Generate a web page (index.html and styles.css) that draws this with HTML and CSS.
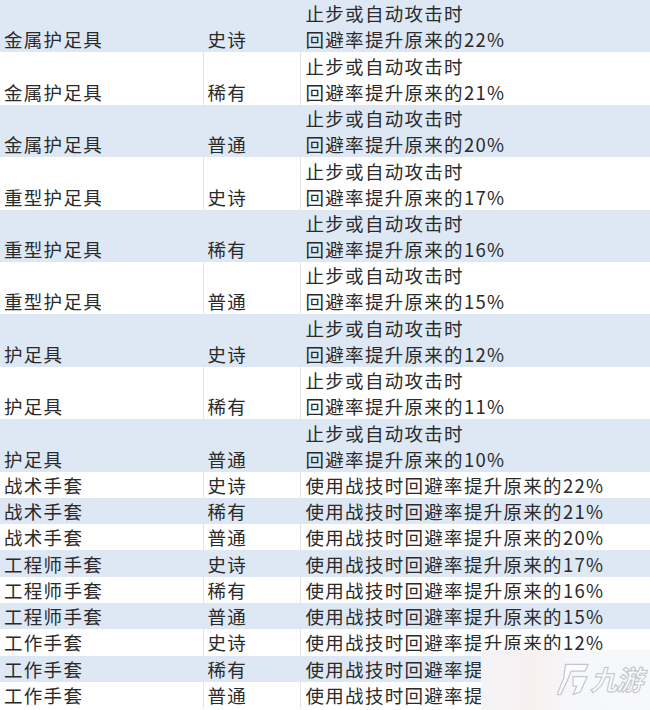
FILE: index.html
```html
<!DOCTYPE html>
<html lang="zh-CN">
<head>
<meta charset="utf-8">
<title>回避率装备表</title>
<link rel="stylesheet" href="styles.css">
</head>
<body>
<div class="page">
<table class="gear">
<colgroup><col class="c-name"><col class="c-rare"><col class="c-eff"></colgroup>
<tbody>
<tr class="tall blue"><td>金属护足具</td><td>史诗</td><td class="eff">止步或自动攻击时<br>回避率提升原来的22%</td></tr>
<tr class="tall white"><td>金属护足具</td><td>稀有</td><td class="eff">止步或自动攻击时<br>回避率提升原来的21%</td></tr>
<tr class="tall blue"><td>金属护足具</td><td>普通</td><td class="eff">止步或自动攻击时<br>回避率提升原来的20%</td></tr>
<tr class="tall white"><td>重型护足具</td><td>史诗</td><td class="eff">止步或自动攻击时<br>回避率提升原来的17%</td></tr>
<tr class="tall blue"><td>重型护足具</td><td>稀有</td><td class="eff">止步或自动攻击时<br>回避率提升原来的16%</td></tr>
<tr class="tall white"><td>重型护足具</td><td>普通</td><td class="eff">止步或自动攻击时<br>回避率提升原来的15%</td></tr>
<tr class="tall blue"><td>护足具</td><td>史诗</td><td class="eff">止步或自动攻击时<br>回避率提升原来的12%</td></tr>
<tr class="tall white"><td>护足具</td><td>稀有</td><td class="eff">止步或自动攻击时<br>回避率提升原来的11%</td></tr>
<tr class="tall blue"><td>护足具</td><td>普通</td><td class="eff">止步或自动攻击时<br>回避率提升原来的10%</td></tr>
<tr class="short white"><td>战术手套</td><td>史诗</td><td class="eff">使用战技时回避率提升原来的22%</td></tr>
<tr class="short blue"><td>战术手套</td><td>稀有</td><td class="eff">使用战技时回避率提升原来的21%</td></tr>
<tr class="short white"><td>战术手套</td><td>普通</td><td class="eff">使用战技时回避率提升原来的20%</td></tr>
<tr class="short blue"><td>工程师手套</td><td>史诗</td><td class="eff">使用战技时回避率提升原来的17%</td></tr>
<tr class="short white"><td>工程师手套</td><td>稀有</td><td class="eff">使用战技时回避率提升原来的16%</td></tr>
<tr class="short blue"><td>工程师手套</td><td>普通</td><td class="eff">使用战技时回避率提升原来的15%</td></tr>
<tr class="short white"><td>工作手套</td><td>史诗</td><td class="eff">使用战技时回避率提升原来的12%</td></tr>
<tr class="short blue"><td>工作手套</td><td>稀有</td><td class="eff">使用战技时回避率提升原来的11%</td></tr>
<tr class="short white"><td>工作手套</td><td>普通</td><td class="eff">使用战技时回避率提升原来的10%</td></tr>
</tbody>
</table>
<div class="watermark">
<svg class="wm-logo" viewBox="0 0 34 36" width="32" height="35">
<path d="M9 2 L33 2 L30 9 L15 9 L11 19 L4 34 L0 34 L7 17 Z M17 15 L32 15 L25 31 L17 34 L21 25 L17 25 Z" fill="#fbfbfc" stroke="#c3c7cd" stroke-width="1.3" stroke-linejoin="round"/>
</svg>
<span class="wm-text">九游</span>
</div>
</div>
</body>
</html>
```
FILE: styles.css
```css
html, body {
  margin: 0;
  padding: 0;
  background: #ffffff;
}
.page {
  position: relative;
  width: 650px;
  height: 710px;
  overflow: hidden;
}
.gear {
  width: 650px;
  border-collapse: collapse;
  table-layout: fixed;
  font-family: "Noto Sans CJK SC", "Noto Sans", sans-serif;
  font-size: 18.5px;
  letter-spacing: 1.3px;
  color: #2a2a2a;
}
.c-name { width: 203px; }
.c-rare { width: 97px; }
.c-eff { width: 350px; }
.gear td {
  padding: 0 0 0 4px;
  white-space: nowrap;
  overflow: hidden;
  border-left: 1px solid transparent;
}
.gear td:nth-child(2) { padding-left: 4px; }
.gear td.eff { padding-left: 5px; }
.gear tr.white td { background: #ffffff; border-left-color: #e4e4e4; }
.gear tr.blue td { background: #dde8f4; border-left-color: #dde8f4; }
.gear tr td:first-child { border-left: none; }
.tall td {
  height: 52.4px;
  line-height: 26px;
  vertical-align: bottom;
}
.short td {
  height: 26.3px;
  line-height: 26px;
  vertical-align: middle;
}
.watermark {
  position: absolute;
  left: 481px;
  top: 650px;
  width: 169px;
  height: 60px;
  background: linear-gradient(90deg, #f3f4f6, #f8f0f0 30%, #f6f7f9 55%, #f7f8fa);
  display: flex;
  align-items: center;
  justify-content: flex-end;
  gap: 4px;
  padding: 0 5px 2px 0;
  box-sizing: border-box;
}
.wm-logo { display: block; }
.wm-text {
  font-family: "Noto Sans CJK SC", sans-serif;
  font-weight: 700;
  font-size: 27px;
  line-height: 32px;
  color: #fbfbfc;
  -webkit-text-stroke: 1px #bfc3ca;
  transform: skewX(-14deg);
  display: inline-block;
  letter-spacing: -1px;
}
```
